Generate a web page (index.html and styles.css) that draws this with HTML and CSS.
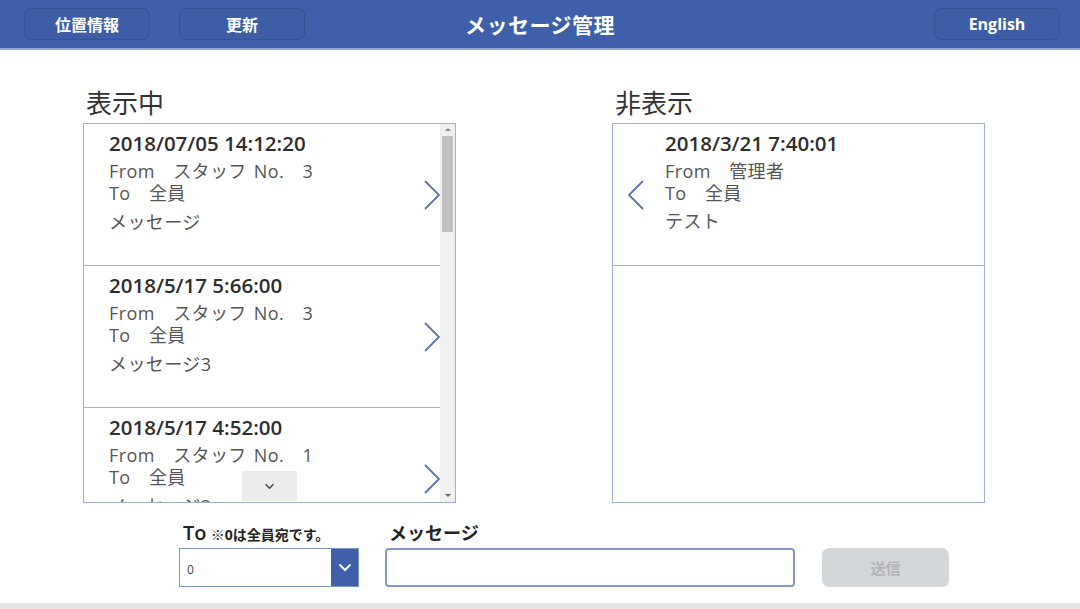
FILE: index.html
```html
<!DOCTYPE html>
<html lang="ja">
<head>
<meta charset="utf-8">
<title>メッセージ管理</title>
<link rel="stylesheet" href="styles.css">
</head>
<body>
<div class="page">
  <header class="topbar">
    <div class="topbar-left">
      <button class="hbtn">位置情報</button>
      <button class="hbtn">更新</button>
    </div>
    <h1 class="title">メッセージ管理</h1>
    <div class="topbar-right">
      <button class="hbtn">English</button>
    </div>
  </header>

  <main class="main">
    <section class="panel">
      <h2 class="panel-title">表示中</h2>
      <div class="listbox">
        <div class="list">
          <div class="item">
            <div class="item-text">
              <div class="date">2018/07/05 14:12:20</div>
              <div class="line from">From　スタッフ No.　3</div>
              <div class="line">To　全員</div>
              <div class="line msg">メッセージ</div>
            </div>
            <svg class="chev" viewBox="0 0 18 32" width="18" height="32"><polyline points="2,2 16,16 2,30" fill="none" stroke="#5872b4" stroke-width="1.8"/></svg>
          </div>
          <div class="item">
            <div class="item-text">
              <div class="date">2018/5/17 5:66:00</div>
              <div class="line from">From　スタッフ No.　3</div>
              <div class="line">To　全員</div>
              <div class="line msg">メッセージ3</div>
            </div>
            <svg class="chev" viewBox="0 0 18 32" width="18" height="32"><polyline points="2,2 16,16 2,30" fill="none" stroke="#5872b4" stroke-width="1.8"/></svg>
          </div>
          <div class="item">
            <div class="item-text">
              <div class="date">2018/5/17 4:52:00</div>
              <div class="line from">From　スタッフ No.　1</div>
              <div class="line">To　全員</div>
              <div class="line msg">メッセージ2</div>
            </div>
            <svg class="chev" viewBox="0 0 18 32" width="18" height="32"><polyline points="2,2 16,16 2,30" fill="none" stroke="#5872b4" stroke-width="1.8"/></svg>
          </div>
        </div>
        <div class="scrollbar">
          <div class="arrow-up"></div>
          <div class="thumb"></div>
          <div class="track-fill"></div>
          <div class="arrow-down"></div>
        </div>
        <div class="more-btn">
          <svg viewBox="0 0 12 8" width="11" height="7"><polyline points="1.5,1.5 6,6 10.5,1.5" fill="none" stroke="#444" stroke-width="1.6"/></svg>
        </div>
      </div>
    </section>

    <section class="panel">
      <h2 class="panel-title">非表示</h2>
      <div class="listbox">
        <div class="list">
          <div class="item item-rev">
            <svg class="chev chev-left" viewBox="0 0 18 32" width="18" height="32"><polyline points="16,2 2,16 16,30" fill="none" stroke="#5872b4" stroke-width="1.8"/></svg>
            <div class="item-text">
              <div class="date">2018/3/21 7:40:01</div>
              <div class="line from">From　管理者</div>
              <div class="line">To　全員</div>
              <div class="line msg2">テスト</div>
            </div>
          </div>
          <div class="item item-empty"></div>
        </div>
      </div>
    </section>
  </main>

  <form class="sendbar">
    <div class="field field-to">
      <label class="flabel"><span class="to">To</span> <span class="note">※0は全員宛です。</span></label>
      <div class="select">
        <span class="select-val">0</span>
        <span class="select-btn">
          <svg viewBox="0 0 14 9" width="14" height="9"><polyline points="1.5,1.5 7,7 12.5,1.5" fill="none" stroke="#fff" stroke-width="2"/></svg>
        </span>
      </div>
    </div>
    <div class="field field-msg">
      <label class="flabel msg-label">メッセージ</label>
      <input class="textin" type="text">
    </div>
    <div class="field field-send">
      <button type="button" class="sendbtn" disabled>送信</button>
    </div>
  </form>

  <div class="bottom-strip"></div>
</div>
</body>
</html>
```

FILE: styles.css
```css
* { box-sizing: border-box; }

html, body {
  margin: 0;
  padding: 0;
  background: #ffffff;
}

body {
  font-family: "Open Sans", "Noto Sans CJK JP", sans-serif;
  color: #333;
  overflow: hidden;
}

.page {
  width: 1080px;
  height: 609px;
  display: flex;
  flex-direction: column;
}

/* Header */
.topbar {
  height: 50px;
  flex: none;
  background: #3e5fa9;
  border-bottom: 2px solid #8ea7d8;
  display: grid;
  grid-template-columns: 1fr auto 1fr;
  align-items: center;
  padding: 0 20px 1px 24px;
}

.topbar-left {
  display: flex;
  gap: 29px;
}

.topbar-right {
  display: flex;
  justify-content: flex-end;
}

.hbtn {
  width: 126px;
  height: 32px;
  border: 1px solid #34538f;
  border-radius: 7px;
  background: #3d5da6;
  color: #ffffff;
  font-family: "Open Sans", "Noto Sans CJK JP", sans-serif;
  font-weight: 700;
  font-size: 16px;
  padding: 0;
}

.title {
  margin: 0 4px 0 0;
  color: #ffffff;
  font-size: 21px;
  font-weight: 700;
  letter-spacing: 0.5px;
}

/* Main */
.main {
  flex: none;
  display: flex;
  padding: 36px 0 0 83px;
  gap: 156px;
}

.panel {
  display: flex;
  flex-direction: column;
}

.panel-title {
  margin: 0 0 1px 3px;
  font-size: 26px;
  line-height: 34px;
  font-weight: 400;
  color: #333;
  padding-bottom: 2px;
}

.listbox {
  position: relative;
  width: 373px;
  height: 380px;
  border: 1px solid #9eb0d4;
  display: flex;
  overflow: hidden;
}

.list {
  flex: 1;
  overflow: hidden;
}

.item {
  height: 142px;
  border-bottom: 1px solid #9eb0d4;
  display: flex;
  align-items: center;
  justify-content: space-between;
  padding: 0 0 0 25px;
}

.item-text {
  align-self: flex-start;
  padding-top: 7px;
}

.date {
  font-size: 20.5px;
  line-height: 24px;
  font-weight: 600;
  color: #2e2e2e;
}

.line {
  font-size: 18px;
  line-height: 22px;
  color: #555;
  letter-spacing: 0.4px;
}

.from { margin-top: 5px; word-spacing: 2px; }
.msg { margin-top: 7px; }
.msg2 { margin-top: 6px; }

.chev {
  flex: none;
  margin-right: -1px;
}

.item-rev {
  justify-content: flex-start;
  padding-left: 14px;
}

.chev-left {
  margin-right: 20px;
}

.item-empty {
  border-bottom: none;
}

/* Fake scrollbar */
.scrollbar {
  width: 15px;
  flex: none;
  background: #f0f0f0;
  display: flex;
  flex-direction: column;
  align-items: center;
}

.arrow-up {
  margin-top: 4px;
  width: 0;
  height: 0;
  border-left: 3px solid transparent;
  border-right: 3px solid transparent;
  border-bottom: 3px solid #888;
}

.arrow-down {
  margin-bottom: 5px;
  width: 0;
  height: 0;
  border-left: 3px solid transparent;
  border-right: 3px solid transparent;
  border-top: 3px solid #666;
}

.thumb {
  margin-top: 5px;
  width: 11px;
  height: 96px;
  background: #c1c1c1;
}

.track-fill { flex: 1; }

.more-btn {
  position: absolute;
  left: 158px;
  top: 347px;
  width: 55px;
  height: 30px;
  background: #ececec;
  display: flex;
  align-items: center;
  justify-content: center;
}

/* Send bar */
.sendbar {
  flex: none;
  display: flex;
  align-items: flex-end;
  padding: 17px 0 0 179px;
  margin: 0;
}

.field {
  display: flex;
  flex-direction: column;
}

.flabel {
  height: 28px;
  line-height: 26px;
  color: #222;
  white-space: nowrap;
}

.to {
  font-size: 20px;
  font-weight: 600;
  margin-left: 4px;
}

.note {
  font-size: 14px;
  font-weight: 700;
}

.msg-label {
  font-size: 18px;
  font-weight: 700;
  margin-left: 4px;
}

.field-to { width: 180px; }

.select {
  height: 39px;
  border: 1px solid #7f95c8;
  display: flex;
  align-items: stretch;
  background: #fff;
}

.select-val {
  flex: 1;
  font-size: 12px;
  color: #444;
  padding-left: 7px;
  display: flex;
  align-items: center;
  padding-top: 3px;
}

.select-btn {
  width: 27px;
  background: #3e5fa9;
  display: flex;
  align-items: center;
  justify-content: center;
}

.field-msg {
  margin-left: 26px;
}

.textin {
  width: 410px;
  height: 39px;
  border: 2px solid #8596cc;
  border-radius: 4px;
  outline: none;
  background: #fff;
}

.field-send {
  margin-left: 27px;
}

.sendbtn {
  width: 127px;
  height: 39px;
  border: none;
  border-radius: 7px;
  background: #d4d7da;
  color: #b3b3b3;
  font-family: "Open Sans", "Noto Sans CJK JP", sans-serif;
  font-size: 15px;
  font-weight: 700;
}

.bottom-strip {
  margin-top: auto;
  height: 6px;
  background: #e6e6e6;
}
```
